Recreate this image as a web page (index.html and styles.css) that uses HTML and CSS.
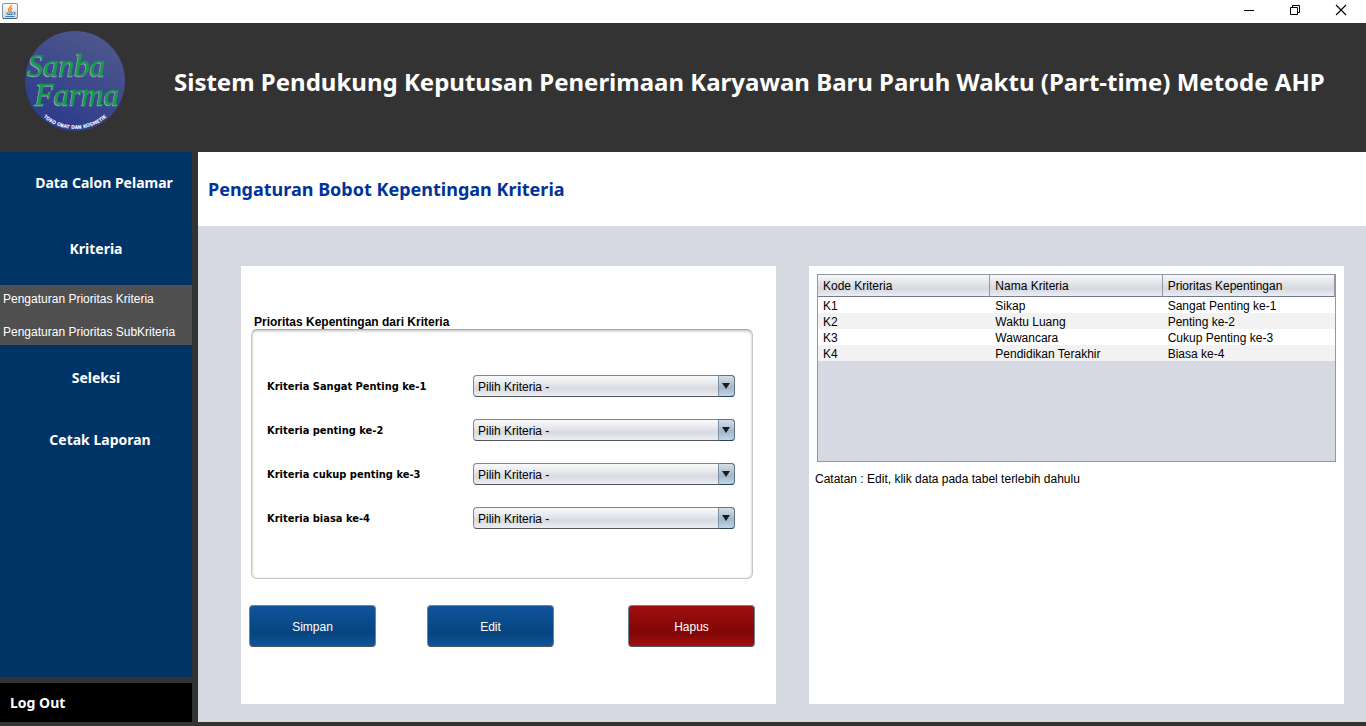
FILE: index.html
```html
<!DOCTYPE html>
<html lang="id">
<head>
<meta charset="utf-8">
<meta name="viewport" content="width=device-width, initial-scale=1">
<title>Sistem Pendukung Keputusan</title>
<link rel="stylesheet" href="styles.css">
</head>
<body>
<div class="titlebar">
  <svg class="app-icon" width="16" height="16" viewBox="0 0 16 16" aria-hidden="true">
    <defs><linearGradient id="cup-bg" x1="0" y1="0" x2="0" y2="1"><stop offset="0" stop-color="#fff"/><stop offset="1" stop-color="#cbd6df"/></linearGradient></defs>
    <rect x=".5" y=".5" width="15" height="15" rx="1.5" fill="url(#cup-bg)" stroke="#7896ab"/>
    <path d="M1 15.5h14" stroke="#41677f"/>
    <path d="M9.5 2C10 4 6 5 6.500 7c.2 1 1 1.200 1 2M10.500 5C8 6 8.500 7 9 7.500S9 9 8.500 9" fill="none" stroke="#ef7d17" stroke-width="1.300"/>
    <path d="M4 10h7M5 11.500h5.500M11.500 9.500c2-.5 2 1.500 0 2M3.500 13.500h9" fill="none" stroke="#4c7fa8" stroke-width="1.200"/>
  </svg>
  <div class="window-controls">
    <button type="button" aria-label="Minimize"><svg width="12" height="12" viewBox="0 0 12 12"><path d="M1 6.500h10" stroke="#000"/></svg></button>
    <button type="button" aria-label="Restore"><svg width="12" height="12" viewBox="0 0 12 12"><path d="M1.500 3.500h7v7h-7zM3.500 3.500v-2h7v7h-2" fill="none" stroke="#000"/></svg></button>
    <button type="button" aria-label="Close"><svg width="12" height="12" viewBox="0 0 12 12"><path d="M1 1l10 10M11 1L1 11" stroke="#000" stroke-width="1.100"/></svg></button>
  </div>
</div>
<header class="banner">
  <svg class="logo" width="102" height="102" viewBox="0 0 102 102" role="img" aria-label="Sanba Farma">
    <defs>
      <linearGradient id="disc" x1=".8" y1="0" x2=".3" y2="1"><stop offset="0" stop-color="#50598d"/><stop offset="1" stop-color="#2b3a8b"/></linearGradient>
      <path id="arc" d="M3 50A48 48 0 0 0 99 50"/>
    </defs>
    <circle cx="51" cy="50" r="50" fill="url(#disc)"/>
    <g class="logo-name"><text x="4" y="45">Sanba</text><text x="11" y="74">Farma</text></g>
    <text class="logo-tag"><textPath href="#arc" startOffset="50%">TOKO OBAT DAN KOSMETIK</textPath></text>
  </svg>
  <h1>Sistem Pendukung Keputusan Penerimaan Karyawan Baru Paruh Waktu (Part-time) Metode AHP</h1>
</header>
<div class="workspace">
  <nav class="sidebar">
    <div class="menu">
      <a class="menu-item menu-item-data" href="#">Data Calon Pelamar</a>
      <a class="menu-item menu-item-criteria" href="#">Kriteria</a>
      <div class="submenu">
        <a href="#">Pengaturan Prioritas Kriteria</a>
        <a href="#">Pengaturan Prioritas SubKriteria</a>
      </div>
      <a class="menu-item" href="#">Seleksi</a>
      <a class="menu-item menu-item-report" href="#">Cetak Laporan</a>
    </div>
    <button class="logout" type="button">Log Out</button>
  </nav>
  <main class="main">
    <div class="page-title"><h2>Pengaturan Bobot Kepentingan Kriteria</h2></div>
    <div class="panels">
      <form class="panel form-panel">
        <h3 class="group-title" id="group-title">Prioritas Kepentingan dari Kriteria</h3>
        <div class="group" role="group" aria-labelledby="group-title">
          <div class="field"><label for="k1">Kriteria Sangat Penting ke-1</label><div class="combo"><select id="k1"><option>Pilih Kriteria -</option></select></div></div>
          <div class="field"><label for="k2">Kriteria penting ke-2</label><div class="combo"><select id="k2"><option>Pilih Kriteria -</option></select></div></div>
          <div class="field"><label for="k3">Kriteria cukup penting ke-3</label><div class="combo"><select id="k3"><option>Pilih Kriteria -</option></select></div></div>
          <div class="field"><label for="k4">Kriteria biasa ke-4</label><div class="combo"><select id="k4"><option>Pilih Kriteria -</option></select></div></div>
        </div>
        <div class="actions">
          <button class="btn" type="button">Simpan</button>
          <button class="btn" type="button">Edit</button>
          <button class="btn btn-danger" type="button">Hapus</button>
        </div>
      </form>
      <section class="panel table-panel">
        <div class="table-box">
          <table>
            <thead><tr><th scope="col">Kode Kriteria</th><th scope="col">Nama Kriteria</th><th scope="col">Prioritas Kepentingan</th></tr></thead>
            <tbody>
              <tr><td>K1</td><td>Sikap</td><td>Sangat Penting ke-1</td></tr>
              <tr><td>K2</td><td>Waktu Luang</td><td>Penting ke-2</td></tr>
              <tr><td>K3</td><td>Wawancara</td><td>Cukup Penting ke-3</td></tr>
              <tr><td>K4</td><td>Pendidikan Terakhir</td><td>Biasa ke-4</td></tr>
            </tbody>
          </table>
        </div>
        <p class="note">Catatan : Edit, klik data pada tabel terlebih dahulu</p>
      </section>
    </div>
  </main>
</div>
</body>
</html>
```
FILE: styles.css
```css
:root {
  --ui: "Liberation Sans", Arial, sans-serif;
  --head: "Noto Sans", Tahoma, sans-serif;
  --label: "DejaVu Sans Condensed", Tahoma, sans-serif;
  --dark: #333333;
  --navy: #003366;
  --grey: #d6d9e1;
}
*, *::before, *::after { box-sizing: border-box; }
body {
  margin: 0;
  min-height: 100vh;
  display: flex;
  flex-direction: column;
  background: var(--dark);
  font: 12px/16px var(--ui);
  color: #000;
}
h1, h2, h3, p { margin: 0; }
a { color: inherit; text-decoration: none; }
button, select { font: inherit; color: inherit; }

.titlebar {
  display: flex;
  justify-content: space-between;
  align-items: center;
  height: 23px;
  padding: 0 2px;
  background: #fff;
}
.window-controls { display: flex; }
.window-controls button {
  display: flex;
  align-items: center;
  justify-content: center;
  width: 46px;
  height: 22px;
  padding: 0 0 4px;
  border: 0;
  background: none;
}
.window-controls svg { display: block; }
.app-icon { margin-bottom: 2px; }

.banner {
  display: flex;
  align-items: center;
  gap: 48px;
  min-height: 129px;
  padding: 0 24px 12px;
  color: #fff;
}
.logo { flex: none; }
.logo-name {
  font: italic 31px "Liberation Serif", serif;
  fill: #17984e;
  stroke: #17984e;
  stroke-width: 0.5;
  filter: drop-shadow(-1px 1px 0 #8fa0b5);
}
.logo-tag { font: bold 5px var(--label); fill: #fff; text-anchor: middle; }
h1 { font: bold 24px/32px var(--head); }

.workspace {
  flex: 1;
  display: flex;
  gap: 6px;
  padding-bottom: 4px;
}
.sidebar {
  flex: 0 0 192px;
  display: flex;
  flex-direction: column;
  gap: 6px;
  color: #fff;
}
.menu { flex: 1; background: var(--navy); }
.menu-item {
  display: block;
  padding: 22px 0;
  font: bold 14px/18px var(--head);
  text-align: center;
}
.menu-item-data { padding-left: 16px; }
.menu-item-criteria { padding: 26px 0; }
.menu-item-criteria + .submenu { margin-top: 1px; }
.menu-item-report { padding-left: 8px; }
.submenu {
  display: flex;
  flex-direction: column;
  gap: 17px;
  padding: 6px 3px 5px;
  margin-bottom: 2px;
  background: #505050;
}
.logout {
  height: 39px;
  padding: 0 10px;
  border: 0;
  background: #000;
  font: bold 14px/18px var(--head);
  text-align: left;
}

.main {
  flex: 1;
  display: flex;
  flex-direction: column;
  background: var(--grey);
}
.page-title {
  display: flex;
  align-items: center;
  min-height: 74px;
  padding: 0 10px;
  background: #fff;
}
h2 { font: bold 18px/24px var(--head); color: #003399; }
.panels {
  flex: 1;
  display: grid;
  grid-template-columns: 1fr 1fr;
  gap: 33px;
  padding: 40px 22px 18px 43px;
}
.panel { background: #fff; min-width: 0; }

.form-panel { padding: 49px 21px 48px 8px; }
.group-title { padding-left: 5px; font: bold 12px/14px var(--ui); }
.group {
  display: flex;
  flex-direction: column;
  gap: 22px;
  margin: 0 2px;
  padding: 45px 17px 49px 15px;
  border: 1px solid #c4c4c4;
  border-top-color: #a8a8a8;
  border-radius: 6px;
  box-shadow: inset 0 1px 3px #bbb;
}
.field { display: flex; align-items: center; justify-content: space-between; }
.field label { padding-top: 2px; font: bold 11px/16px var(--label); }
.combo { position: relative; width: 262px; }
.combo select {
  appearance: none;
  display: block;
  width: 100%;
  height: 22px;
  padding: 2px 20px 0 4px;
  border: 1px solid #81858f;
  border-bottom-color: #4f535c;
  border-radius: 4px;
  background: linear-gradient(#fafafb, #e2e4e9 45%, #d6d9df 60%, #eceef4);
}
.combo::after {
  content: "";
  position: absolute;
  top: 0;
  right: 0;
  width: 17px;
  height: 22px;
  border: 1px solid #5d7487;
  border-bottom-color: #2c4258;
  border-left-color: #7b90a5;
  border-radius: 0 4px 4px 0;
  background: linear-gradient(#d5dfe8, #a9bccd 50%, #a3b8cb 60%, #c0d6e9);
  pointer-events: none;
}
.combo::before {
  content: "";
  position: absolute;
  z-index: 1;
  top: 8px;
  right: 5px;
  border: solid transparent;
  border-width: 6px 4px 0;
  border-top-color: #1c1c1c;
  pointer-events: none;
}
.actions {
  display: grid;
  grid-template-columns: 127px 1fr 127px;
  column-gap: 51px;
  margin-top: 26px;
}
.btn {
  width: 127px;
  height: 42px;
  padding: 2px 0 0;
  border: 1px solid #76828e;
  border-bottom-color: #4d5358;
  border-radius: 4px;
  background: linear-gradient(#10549d, #074681 60%, #074681 72%, #0e559f);
  color: #fff;
}
.btn-danger { background: linear-gradient(#9f1010, #840707 60%, #840707 72%, #a31010); }

.table-panel { padding: 8px 8px 8px 6px; }
.table-box {
  height: 188px;
  margin-left: 2px;
  border: 1px solid #9297a1;
  background: var(--grey);
}
table { width: 100%; table-layout: fixed; border-collapse: separate; border-spacing: 0; }
th, td { padding: 0 5px; text-align: left; font-weight: normal; }
th {
  height: 22px;
  border-right: 1px solid #9297a1;
  border-bottom: 1px solid #737985;
  background: linear-gradient(#f7f7f9, #dcdfe4 50%, #d6d9df 65%, #e9edf5);
}
td { height: 16px; padding-top: 2px; line-height: 14px; background: #fff; }
tbody tr:nth-child(even) td { background: #f2f2f2; }
.note { margin: 9px 0 0; }
```
